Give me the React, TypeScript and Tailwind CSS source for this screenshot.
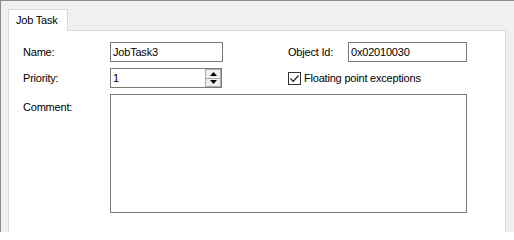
import React from "react";

const font = { fontFamily: '"Liberation Sans", Arial, sans-serif' };

export default function App() {
  return (
    <div
      className="w-[514px] h-[232px] bg-[#f0f0f0] border-t border-l border-[#8a8a8a] flex flex-col text-[11px] tracking-[-0.2px] text-black overflow-hidden"
      style={font}
    >
      <div className="pl-[7px] pt-[8px] flex">
        <div className="relative z-10 -mb-px w-[60px] h-[22px] bg-white border border-b-0 border-[#d9d9d9] flex items-center pl-[7px] leading-none">
          Job Task
        </div>
      </div>
      <div className="ml-[7px] w-[498px] flex-1 bg-white border border-b-0 border-[#d9d9d9] pt-[11px] pl-[14px] flex flex-col gap-[6px]">
        <div className="flex items-center h-[20px]">
          <div className="w-[87px]">Name:</div>
          <div className="w-[113px] h-[20px] border border-[#7a7a7a] flex items-center pl-[2px]">JobTask3</div>
          <div className="w-[65px]" />
          <div className="w-[60px]">Object Id:</div>
          <div className="w-[119px] h-[20px] border border-[#7a7a7a] flex items-center pl-[2px]">0x02010030</div>
        </div>
        <div className="flex items-center h-[20px]">
          <div className="w-[87px]">Priority:</div>
          <div className="w-[112px] h-[20px] border border-[#7a7a7a] flex items-stretch">
            <div className="flex-1 flex items-center pl-[2px]">1</div>
            <div className="w-[16px] flex flex-col">
              <div className="flex-1 bg-[#f0f0f0] border border-[#adadad] flex items-center justify-center">
                <svg width="7" height="4" viewBox="0 0 7 4"><path d="M3.5 0 L7 4 L0 4 Z" fill="#000" /></svg>
              </div>
              <div className="flex-1 bg-[#f0f0f0] border border-t-0 border-[#adadad] flex items-center justify-center">
                <svg width="7" height="4" viewBox="0 0 7 4"><path d="M0 0 L7 0 L3.5 4 Z" fill="#000" /></svg>
              </div>
            </div>
          </div>
          <div className="w-[66px]" />
          <div className="flex items-center gap-[3px]">
            <div className="w-[13px] h-[13px] border border-[#333] bg-white flex items-center justify-center">
              <svg width="11" height="11" viewBox="0 0 11 11">
                <path d="M1.5 5.5 L4.2 8.3 L9.5 2.5" fill="none" stroke="#222" strokeWidth="1.2" />
              </svg>
            </div>
            <span>Floating point exceptions</span>
          </div>
        </div>
        <div className="flex items-start">
          <div className="w-[87px] pt-[5px]">Comment:</div>
          <div className="w-[357px] h-[119px] border border-[#7a7a7a] bg-white" />
        </div>
      </div>
    </div>
  );
}
